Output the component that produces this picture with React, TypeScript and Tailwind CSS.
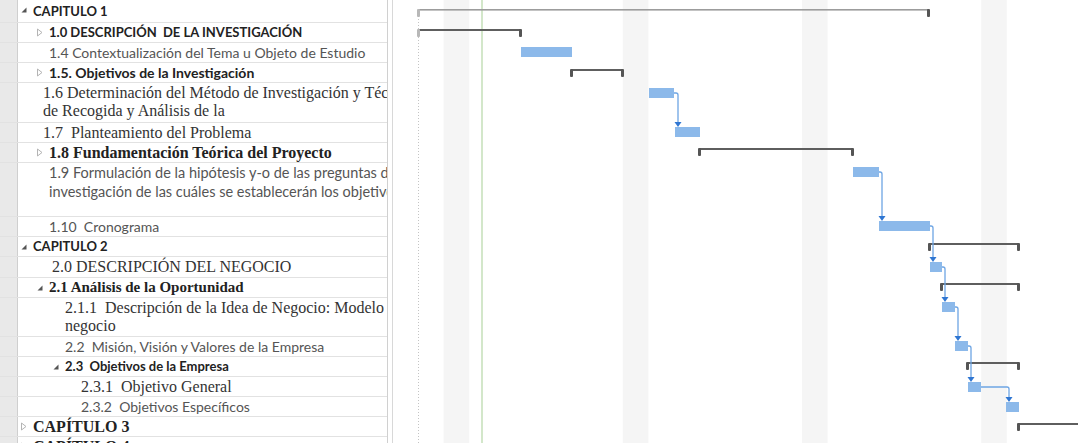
import React from 'react';

type Row = {
  h: string;
  level: number;
  toggle?: 'open' | 'closed';
  lines: string[];
  font: string;
  lead: string;
  shift?: string;
};

const SANS = "font-['Lato','Liberation_Sans',sans-serif]";
const SERIF = "font-['Liberation_Serif','Times_New_Roman',serif]";

const indent = ['pl-[2px]', 'pl-[18px]', 'pl-[34px]', 'pl-[50px]'];

const rows: Row[] = [
  { h: 'h-[23px]', level: 0, toggle: 'open', lines: ['CAPITULO 1'], font: `${SANS} text-[13px] font-bold text-[#222]`, lead: 'leading-[22px]' },
  { h: 'h-[20px]', level: 1, toggle: 'closed', lines: ['1.0 DESCRIPCIÓN  DE LA INVESTIGACIÓN'], font: `${SANS} text-[13px] font-bold text-[#222]`, lead: 'leading-[19px]' },
  { h: 'h-[20px]', level: 1, lines: ['1.4 Contextualización del Tema u Objeto de Estudio'], font: `${SANS} text-[14px] text-[#555]`, lead: 'leading-[19px]' },
  { h: 'h-[20px]', level: 1, toggle: 'closed', lines: ['1.5. Objetivos de la Investigación'], font: `${SANS} text-[14px] font-bold text-[#222]`, lead: 'leading-[19px]' },
  { h: 'h-[40px]', level: 1, lines: ['1.6 Determinación del Método de Investigación y Técnicas', 'de Recogida y Análisis de la'], font: `${SERIF} text-[16px] text-[#333]`, lead: 'leading-[18px] pt-px', shift: '-ml-[6px]' },
  { h: 'h-[20px]', level: 1, lines: ['1.7  Planteamiento del Problema'], font: `${SERIF} text-[16px] text-[#333]`, lead: 'leading-[19px]', shift: '-ml-[6px]' },
  { h: 'h-[20px]', level: 1, toggle: 'closed', lines: ['1.8 Fundamentación Teórica del Proyecto'], font: `${SERIF} text-[16px] font-bold text-[#222]`, lead: 'leading-[19px]' },
  { h: 'h-[54px]', level: 1, lines: ['1.9 Formulación de la hipótesis y-o de las preguntas de', 'investigación de las cuáles se establecerán los objetivos'], font: `${SANS} text-[14.5px] text-[#555]`, lead: 'leading-[19px]' },
  { h: 'h-[20px]', level: 1, lines: ['1.10  Cronograma'], font: `${SANS} text-[14px] text-[#555]`, lead: 'leading-[19px]' },
  { h: 'h-[20px]', level: 0, toggle: 'open', lines: ['CAPITULO 2'], font: `${SANS} text-[13px] font-bold text-[#222]`, lead: 'leading-[19px]' },
  { h: 'h-[21px]', level: 1, lines: ['2.0 DESCRIPCIÓN DEL NEGOCIO'], font: `${SERIF} text-[16px] text-[#333]`, lead: 'leading-[20px]', shift: 'ml-[3px]' },
  { h: 'h-[20px]', level: 1, toggle: 'open', lines: ['2.1 Análisis de la Oportunidad'], font: `${SERIF} text-[15px] font-bold text-[#222]`, lead: 'leading-[19px]' },
  { h: 'h-[39px]', level: 2, lines: ['2.1.1  Descripción de la Idea de Negocio: Modelo de', 'negocio'], font: `${SERIF} text-[16px] text-[#333]`, lead: 'leading-[18px] pt-px' },
  { h: 'h-[20px]', level: 2, lines: ['2.2  Misión, Visión y Valores de la Empresa'], font: `${SANS} text-[14px] text-[#555]`, lead: 'leading-[19px]' },
  { h: 'h-[20px]', level: 2, toggle: 'open', lines: ['2.3  Objetivos de la Empresa'], font: `${SANS} text-[13px] font-bold text-[#222]`, lead: 'leading-[19px]' },
  { h: 'h-[20px]', level: 3, lines: ['2.3.1  Objetivo General'], font: `${SERIF} text-[16px] text-[#333]`, lead: 'leading-[19px]' },
  { h: 'h-[20px]', level: 3, lines: ['2.3.2  Objetivos Específicos'], font: `${SANS} text-[14px] text-[#555]`, lead: 'leading-[19px]' },
  { h: 'h-[20px]', level: 0, toggle: 'closed', lines: ['CAPÍTULO 3'], font: `${SERIF} text-[16px] font-bold text-[#222]`, lead: 'leading-[19px]' },
  { h: 'h-[20px]', level: 0, toggle: 'closed', lines: ['CAPÍTULO 4'], font: `${SERIF} text-[16px] font-bold text-[#222]`, lead: 'leading-[19px]' },
];

const Toggle = ({ kind }: { kind?: 'open' | 'closed' }) => {
  if (kind === 'open')
    return (
      <svg width="8" height="8" viewBox="0 0 8 8">
        <polygon points="6.5,1.5 6.5,6.5 1.5,6.5" fill="#555" />
      </svg>
    );
  if (kind === 'closed')
    return (
      <svg width="8" height="9" viewBox="0 0 8 9">
        <polygon points="1.5,1 6,4.5 1.5,8" fill="#fff" stroke="#b4b4b4" strokeWidth="1" />
      </svg>
    );
  return null;
};

const TaskRow = ({ row }: { row: Row }) => (
  <div className={`flex border-b border-[#e2e2e2] ${row.h}`}>
    <div className="w-[18px] shrink-0 border-r border-[#cfcfcf] bg-[#e9e9e9]" />
    <div className={`flex min-w-0 flex-1 overflow-hidden ${indent[row.level]}`}>
      <div className="flex h-[19px] w-[13px] shrink-0 items-center">
        <Toggle kind={row.toggle} />
      </div>
      <div className={`min-w-0 whitespace-pre ${row.font} ${row.lead} ${row.shift ?? ''}`}>
        {row.lines.map((l) => (
          <div key={l}>{l}</div>
        ))}
      </div>
    </div>
  </div>
);

// chart coordinates are page pixels; the svg viewBox starts at the chart's left edge
const X0 = 418;
const DAY = 25.6;

const tasks = [
  { x1: 521, x2: 572, y: 47 },
  { x1: 649, x2: 674, y: 88 },
  { x1: 675, x2: 700, y: 127 },
  { x1: 853, x2: 879, y: 167 },
  { x1: 879, x2: 930, y: 221 },
  { x1: 930, x2: 942, y: 262 },
  { x1: 942, x2: 955, y: 302 },
  { x1: 955, x2: 968, y: 341 },
  { x1: 968, x2: 981, y: 382 },
  { x1: 1006, x2: 1019, y: 402 },
];

const summaries = [
  { x1: 418, x2: 521, y: 29, faintStart: true },
  { x1: 571, x2: 623, y: 69 },
  { x1: 699, x2: 853, y: 148 },
  { x1: 929, x2: 1019, y: 243 },
  { x1: 941, x2: 1019, y: 283 },
  { x1: 967, x2: 1019, y: 362 },
  { x1: 1018, x2: 1110, y: 423 },
];

// finish-to-start links: from end of a bar, down into the next one
const links = [
  { x: 674, y: 93, vx: 678, ty: 127 },
  { x: 879, y: 172, vx: 882, ty: 221 },
  { x: 930, y: 226, vx: 933, ty: 262 },
  { x: 942, y: 267, vx: 945, ty: 302 },
  { x: 955, y: 307, vx: 958, ty: 341 },
  { x: 968, y: 346, vx: 971, ty: 382 },
  { x: 981, y: 387, vx: 1009, ty: 402 },
];

const Gantt = () => (
  <svg width="685" height="443" viewBox="393 0 685 443" className="block">
    {[1, 8, 15, 22].map((d) => (
      <rect key={d} x={X0 + d * DAY} y="0" width={DAY} height="443" fill="#f5f5f5" />
    ))}
    <line x1="482" y1="0" x2="482" y2="443" stroke="#c4dfb9" strokeWidth="1.5" />
    <line x1="418.5" y1="16" x2="418.5" y2="443" stroke="#c4c4c4" strokeDasharray="1 2" />

    {/* project summary */}
    <rect x="418" y="9" width="511" height="1.6" fill="#9c9c9c" />
    <rect x="417" y="9" width="3" height="8" rx="1" fill="#b8b8b8" />
    <rect x="927" y="9" width="3" height="8" rx="1" fill="#555" />

    {summaries.map((s) => (
      <g key={s.y}>
        <rect x={s.x1} y={s.y} width={s.x2 - s.x1} height="2" fill="#5e5e5e" />
        <rect x={s.x1 - 1} y={s.y} width="3" height="8" rx="1" fill={s.faintStart ? '#b8b8b8' : '#555'} />
        <rect x={s.x2 - 2} y={s.y} width="3" height="8" rx="1" fill="#555" />
      </g>
    ))}

    {links.map((k) => (
      <g key={k.y}>
        <path
          d={`M ${k.x} ${k.y} H ${k.vx - 2} Q ${k.vx} ${k.y} ${k.vx} ${k.y + 2} V ${k.ty - 4}`}
          fill="none"
          stroke="#6ea5e4"
          strokeWidth="1.3"
        />
        <polygon points={`${k.vx - 3.5},${k.ty - 5} ${k.vx + 3.5},${k.ty - 5} ${k.vx},${k.ty}`} fill="#2f76d2" />
      </g>
    ))}

    {tasks.map((t) => (
      <rect key={t.y} x={t.x1} y={t.y} width={t.x2 - t.x1} height="10" fill="#8cb9ea" />
    ))}
  </svg>
);

export default function App() {
  return (
    <div className="flex h-[443px] w-[1078px] overflow-hidden bg-white">
      <div className="w-[388px] shrink-0 overflow-hidden border-r border-[#d0d0d0]">
        {rows.map((r, i) => (
          <TaskRow key={i} row={r} />
        ))}
      </div>
      <div className="w-[4px] shrink-0 bg-white" />
      <div className="flex-1 overflow-hidden border-l border-[#d8d8d8]">
        <Gantt />
      </div>
    </div>
  );
}
